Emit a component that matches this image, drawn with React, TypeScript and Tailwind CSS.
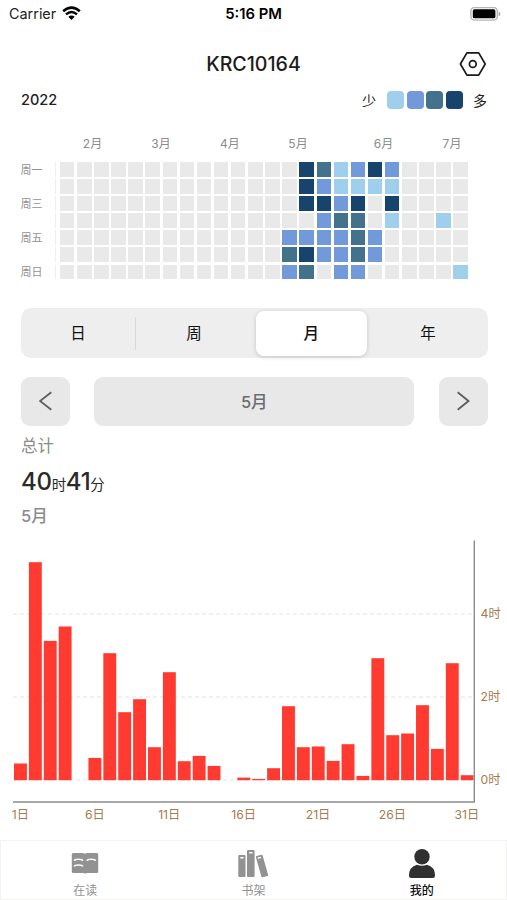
const FONT_CLASS = "font-['Inter','Noto_Sans_CJK_SC',sans-serif]";

const LEVELS: Record<string, string> = {
  ".": "bg-[#e9e9e9]",
  a: "bg-[#9fcfec]",
  b: "bg-[#7299da]",
  c: "bg-[#42728c]",
  d: "bg-[#17446c]",
};

// one string per weekday, one character per week
const HEATMAP = [
  "..............dcabdb....",
  "..............dbaaaa....",
  "..............ddbd.d....",
  "...............bcc.a..a.",
  ".............bbbbcb.....",
  ".............cdbbcb.....",
  ".............bc.bb.....a",
];

const WEEKDAYS = ["周一", "", "周三", "", "周五", "", "周日"];

const MONTHS = [
  { label: "2月", x: 92.5 },
  { label: "3月", x: 161 },
  { label: "4月", x: 230 },
  { label: "5月", x: 298 },
  { label: "6月", x: 383.5 },
  { label: "7月", x: 452 },
];

// bar heights in px, 82.9px is two hours
const BARS = [
  16.7, 218, 139.3, 153.7, 0, 22.3, 127, 68, 81, 33, 108, 19, 24.3, 14.3, 0,
  2.6, 1.3, 12, 74, 33, 33.7, 19.3, 36, 4.3, 122, 45, 46.7, 75, 31.3, 117, 5,
];

function StatusBar() {
  return (
    <div className="grid h-7 grid-cols-3 items-center text-[14px] text-black">
      <div className="flex items-center gap-[6px] pl-[9px]">
        <span className="text-[14.4px] text-[#222]">Carrier</span>
        <svg width="19" height="15" viewBox="0 0 19 15" fill="none" stroke="#000">
          <path d="M1.2 5.2Q9.5-2.1 17.8 5.2" strokeWidth="2.6" />
          <path d="M4 8.4Q9.5 3.6 15 8.4" strokeWidth="2.4" />
          <path d="M9.5 14L6.3 10.8Q9.5 8.2 12.7 10.8Z" fill="#000" stroke="none" />
        </svg>
      </div>
      <span className="text-center text-[14.8px] font-semibold">5:16 PM</span>
      <div className="flex justify-end pr-[6px]">
        <svg width="31" height="15" viewBox="0 0 31 15">
          <rect x="0.9" y="0.5" width="26.4" height="12.6" rx="3.6" fill="#fff" stroke="#b5b5b5" strokeWidth="1.4" />
          <rect x="2.8" y="2.3" width="22.6" height="9" rx="1.6" fill="#000" />
          <path d="M28.6 4.6v4.6q1.8-.7 1.8-2.3t-1.8-2.3Z" fill="#aaa" />
        </svg>
      </div>
    </div>
  );
}

function Header() {
  return (
    <header className="grid h-[56px] grid-cols-[1fr_auto_1fr] items-center pt-[16px] pr-[20px]">
      <span />
      <h1 className="pt-[2px] pl-[20px] text-[19.6px] font-medium text-[#1c1c1c]">KRC10164</h1>
      <svg className="justify-self-end" width="28" height="26" viewBox="0 0 28 26" fill="none" stroke="#1a1a1a" strokeWidth="1.7" strokeLinejoin="round">
        <path d="M7.9 1.9h11.800L26.200 13l-6.500 11.100H7.900L1.400 13Z" />
        <circle cx="13.8" cy="13" r="3.4" />
      </svg>
    </header>
  );
}

function Legend() {
  return (
    <div className="flex h-8 items-center justify-between pr-[20px] pl-[21px]">
      <span className="text-[14.5px] font-medium text-[#222]">2022</span>
      <div className="flex items-center text-[14px] text-[#222]">
        <span className="mr-[11px]">少</span>
        <div className="flex gap-[2.4px]">
          {["a", "b", "c", "d"].map((level) => (
            <span key={level} className={`h-[17.5px] w-[17.2px] rounded-[4px] ${LEVELS[level]}`} />
          ))}
        </div>
        <span className="ml-[10px]">多</span>
      </div>
    </div>
  );
}

function Heatmap() {
  return (
    <section className="pt-[18px]">
      <svg className="block" width="507" height="28">
        {MONTHS.map((month) => (
          <text key={month.label} x={month.x} y="14" textAnchor="middle" fontSize="12" fill="#8c8c8c">
            {month.label}
          </text>
        ))}
      </svg>
      <div className="flex flex-col gap-[2.6px]">
        {HEATMAP.map((row, day) => (
          <div key={day} className="flex h-[14.5px] items-center">
            <span className="w-[34.5px] pt-[2px] pl-[20.5px] text-[11px] leading-none whitespace-nowrap text-[#929292]">
              {WEEKDAYS[day]}
            </span>
            <span className="ml-[20.7px] h-full w-[1.3px] bg-[#eee]" />
            <div className="ml-[3.4px] flex h-full gap-[2.6px]">
              {row.split("").map((level, week) => (
                <span key={week} className={`h-full w-[14.52px] ${LEVELS[level]}`} />
              ))}
            </div>
          </div>
        ))}
      </div>
    </section>
  );
}

function RangeTabs() {
  return (
    <div className="mr-[19.5px] ml-[21px] mt-[29px] flex h-[50px] items-center rounded-[10px] bg-[#eee] text-[15.5px] text-[#111]">
      <span className="w-[114px] pt-[2px] text-center">日</span>
      <span className="h-[33px] w-px bg-[#d8d8d8]" />
      <span className="w-[116px] pt-[2px] text-center">周</span>
      <span className="ml-[4px] flex h-[45px] w-[110.5px] items-center justify-center rounded-[8px] bg-white pt-[2px] font-medium shadow-[0_1px_4px_rgba(0,0,0,0.18)]">
        月
      </span>
      <span className="flex-1 pt-[2px] pl-[2px] text-center">年</span>
    </div>
  );
}

function Arrow({ d }: { d: string }) {
  return (
    <button className="flex h-[49px] w-[49px] items-center justify-center rounded-[9px] bg-[#e8e8e8]">
      <svg width="14" height="20" viewBox="0 0 14 20" fill="none" stroke="#5c5c5c" strokeWidth="1.8">
        <path d={d} />
      </svg>
    </button>
  );
}

function MonthPicker() {
  return (
    <div className="mr-[19.5px] ml-[21px] mt-[18.5px] flex justify-between">
      <Arrow d="M12.3 1.3 1 10l11.3 8.7" />
      <div className="flex h-[49px] w-[320px] items-center justify-center rounded-[9px] bg-[#e8e8e8] pt-[2px] text-[16.5px] font-medium text-[#6c6c6c]">
        5月
      </div>
      <Arrow d="M1.7 1.3 12.5 10 1.7 18.7" />
    </div>
  );
}

function Summary() {
  return (
    <div className="flex h-[104px] flex-col pl-[21px] text-[#8b8b8b]">
      <p className="mt-[7.5px] text-[16.5px] leading-[26px]">总计</p>
      <p className="mt-[6.5px] text-[24px] leading-[32px] font-medium tracking-[-0.3px] text-[#2a2a2a]">
        40<span className="text-[14.5px] font-normal">时</span>41
        <span className="text-[14.5px] font-normal">分</span>
      </p>
      <p className="mt-[2.5px] text-[16.5px] leading-[26px] font-medium">5月</p>
    </div>
  );
}

function Chart() {
  return (
    <svg className="block" width="507" height="300" viewBox="0 530 507 300">
      {[614, 697, 780].map((y, i) => (
        <g key={y}>
          <line x1="13" x2="474" y1={y} y2={y} stroke="#e2e2e2" strokeDasharray="4 3" />
          <text x="480.5" y={y + 3.5} fontSize="12.2" fill="#a57c50">
            {4 - i * 2}时
          </text>
        </g>
      ))}
      {BARS.map((height, i) => (
        <rect key={i} x={14 + i * 14.89} y={780.2 - height} width="12.9" height={height} fill="#ff3a30" />
      ))}
      <path d="M13 802H474.3V540.5" fill="none" stroke="#8c8c8c" strokeWidth="1.4" />
      {[1, 6, 11, 16, 21, 26, 31].map((day, i) => (
        <text key={day} x={20.4 + i * 74.4} y="818.5" textAnchor="middle" fontSize="12.2" fill="#a57c50">
          {day}日
        </text>
      ))}
    </svg>
  );
}

function TabBar() {
  return (
    <nav className="grid h-[60px] grid-cols-3 border border-[#f3f3f1] text-center text-[12px] text-[#929292]">
      <div className="flex flex-col items-center pt-[8px]">
        <svg width="28" height="30" viewBox="0 0 28 30">
          <path d="M.8 5.500Q.8 4 2.300 4H11q2.500 0 3 .8.500-.8 3-.8h8.700q1.500 0 1.500 1.500v17q0 1.500-1.500 1.500H16q-1.200 0-2 .8-.8-.8-2-.8H2.300Q.8 24 .8 22.500Z" fill="#929292" />
          <path d="M3.200 11.800Q3.500 10.300 7.500 10.300t4.300 1.500M3.200 17.500Q3.500 16 7.500 16t4.300 1.500M16 11.800q.3-1.500 4.300-1.500t4.300 1.500" fill="none" stroke="#fff" strokeWidth="1.500" />
        </svg>
        <span className="pt-[1px] leading-[22px]">在读</span>
      </div>
      <div className="flex flex-col items-center pt-[8px]">
        <svg width="32" height="30" viewBox="0 0 32 30" fill="#929292">
          <rect x="1.300" y="6" width="7.200" height="22" rx="1" />
          <rect x="10" y="1" width="7.600" height="27" rx="1" />
          <rect x="21.500" y="6" width="7" height="22" rx="1" transform="rotate(-16 25 17)" />
          <path d="M3.300 8.800h3.300M12.200 3.800h3.300M20.700 9.300l3.300-.9" stroke="#fff" strokeWidth="1.500" />
        </svg>
        <span className="pt-[1px] leading-[22px]">书架</span>
      </div>
      <div className="flex flex-col items-center pt-[8px] text-[#111]">
        <svg width="28" height="30" viewBox="0 0 28 30" fill="#303030">
          <circle cx="14" cy="7.700" r="7.700" />
          <path d="M1 26.500q0-8.500 8-10.700 5 2 10 0 8 2.200 8 10.700 0 2.500-2.500 2.500h-21Q1 29 1 26.500Z" />
        </svg>
        <span className="pt-[1px] leading-[22px] font-medium">我的</span>
      </div>
    </nav>
  );
}

export default function App() {
  return (
    <div className={`flex h-[900px] w-[507px] flex-col overflow-hidden bg-white ${FONT_CLASS}`}>
      <StatusBar />
      <Header />
      <Legend />
      <Heatmap />
      <RangeTabs />
      <MonthPicker />
      <Summary />
      <Chart />
      <div className="mt-auto">
        <TabBar />
      </div>
    </div>
  );
}
